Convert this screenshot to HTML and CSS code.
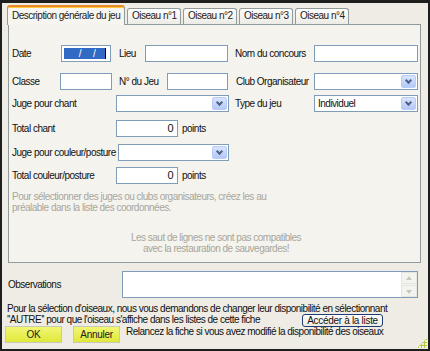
FILE: index.html
```html
<!DOCTYPE html>
<html lang="fr">
<head>
    <meta charset="UTF-8">
    <title>Description du jeu</title>
    <link rel="stylesheet" href="styles.css">
</head>
<body>
<div class="window">
    <!-- Onglets -->
    <div class="tabs">
        <div class="tab active">Description générale du jeu</div>
        <div class="tab">Oiseau n°1</div>
        <div class="tab">Oiseau n°2</div>
        <div class="tab">Oiseau n°3</div>
        <div class="tab">Oiseau n°4</div>
    </div>

    <div class="panel">
        <div class="row r1">
            <span class="lbl w49">Date</span>
            <div class="field date w50"><span class="sel">&nbsp;/&nbsp;&nbsp;/</span><span class="caret"></span></div>
            <span class="lbl lieu">Lieu</span>
            <div class="field w83"></div>
            <span class="lbl nom">Nom du concours</span>
            <div class="field w104"></div>
        </div>
        <div class="row r2">
            <span class="lbl w48">Classe</span>
            <div class="field w52"></div>
            <span class="lbl njeu">N° du Jeu</span>
            <div class="field w61"></div>
            <span class="lbl club">Club Organisateur</span>
            <div class="field combo w104"><span class="arrow"></span></div>
        </div>
        <div class="row r3">
            <span class="lbl w104">Juge pour chant</span>
            <div class="field combo w113"><span class="arrow"></span></div>
            <span class="lbl type">Type du jeu</span>
            <div class="field combo w104"><span class="val">Individuel</span><span class="arrow"></span></div>
        </div>
        <div class="row r4">
            <span class="lbl w104">Total chant</span>
            <div class="field num w62">0</div>
            <span class="unit">points</span>
        </div>
        <div class="row r5">
            <span class="lbl w106">Juge pour couleur/posture</span>
            <div class="field combo w111"><span class="arrow"></span></div>
        </div>
        <div class="row r6">
            <span class="lbl w104">Total couleur/posture</span>
            <div class="field num w62">0</div>
            <span class="unit">points</span>
        </div>
        <p class="hint">Pour sélectionner des juges ou clubs organisateurs, créez les au<br>préalable dans la liste des coordonnées.</p>
        <p class="hint center">Les saut de lignes ne sont pas compatibles<br>avec la restauration de sauvegardes!</p>
    </div>

    <div class="obs">
        <span class="obs-lbl">Observations</span>
        <div class="memo">
            <div class="scroll"><span class="up"></span><span class="down"></span></div>
        </div>
    </div>

    <div class="info">
        <div>Pour la sélection d'oiseaux, nous vous demandons de changer leur disponibilité en sélectionnant</div>
        <div class="info-line">''AUTRE'' pour que l'oiseau s'affiche dans les listes de cette fiche <button class="xp-btn">Accéder à la liste</button></div>
    </div>

    <div class="actions">
        <button class="yb ok">OK</button>
        <button class="yb cancel">Annuler</button>
        <span class="relance">Relancez la fiche si vous avez modifié la disponibilité des oiseaux</span>
    </div>
    <div class="grip"></div>
</div>
</body>
</html>
```

FILE: styles.css
```css
* { box-sizing: border-box; }
body { margin: 0; font-family: 'Liberation Sans', Arial, sans-serif; font-size: 10px; letter-spacing: -0.5px; color: #111; background: #222; }

.window { position: relative; width: 430px; height: 351px; border: 2px solid #1e1e1e; border-top-width: 3px; background: #eeece4; padding: 1px 0 0 5px; overflow: hidden; }

/* Tabs */
.tabs { display: flex; align-items: flex-end; gap: 2px; height: 20px; position: relative; z-index: 2; }
.tab { width: 54px; height: 16px; text-align: center; line-height: 14px; border: 1px solid #919b9c; border-bottom: none; border-radius: 3px 3px 0 0; background: linear-gradient(#fefefe, #ecebe6); color: #222; white-space: nowrap; }
.tab.active { width: auto; height: 20px; padding: 0 4px; line-height: 17px; border-top: 2px solid #e68b2c; background: #f6f5f0; margin-bottom: -1px; box-shadow: inset 0 1px 0 #ffc73c; }

.panel { margin-left: 1px; width: 413px; height: 239px; border: 1px solid #919b9c; background: #f4f3ee; padding: 20px 0 0 3px; }

/* Rows */
.row { display: flex; align-items: center; height: 17px; white-space: nowrap; }
.r2 { margin-top: 11px; }
.r3 { margin-top: 5px; }
.r4 { margin-top: 8px; }
.r5 { margin-top: 7px; }
.r6 { margin-top: 6px; }

.lbl { flex: none; }
.w48 { width: 48px; } .w49 { width: 49px; } .w104 { width: 104px; } .w106 { width: 106px; }
.lieu { width: 26px; margin-left: 8px; }
.nom { width: 79px; margin-left: 7px; }
.njeu { width: 48px; margin-left: 7px; }
.club { width: 78px; margin-left: 8px; }
.type { width: 79px; margin-left: 6px; }

.field { position: relative; flex: none; height: 17px; background: #fff; border: 1px solid #7f9db9; }
.w50 { width: 50px; } .w52 { width: 52px; } .w61 { width: 61px; } .w62 { width: 62px; }
.w83 { width: 83px; } .w111 { width: 111px; } .w113 { width: 113px; }
.field.w104 { width: 104px; }

.date { padding: 2px; }
.date .sel { display: block; height: 11px; width: 42px; background: #316ac5; color: #fff; line-height: 11px; padding-left: 10px; letter-spacing: 2px; }
.date .caret { position: absolute; right: 4px; top: 2px; width: 1px; height: 11px; background: #000; }

.num { text-align: right; padding-right: 4px; line-height: 15px; font-size: 11px; }
.unit { margin-left: 4px; }

.combo .val { padding-left: 3px; line-height: 15px; }
.arrow { position: absolute; right: 1px; top: 1px; width: 15px; height: 13px; border-radius: 2px; background: linear-gradient(#d9e4fd, #b4c8f7); border: 1px solid #b9cdf9; }
.arrow::after { content: ""; position: absolute; left: 4px; top: 2px; width: 3px; height: 3px; border-right: 2px solid #4d6185; border-bottom: 2px solid #4d6185; transform: rotate(45deg); }

.hint { margin: 0; color: #a8a69c; line-height: 11px; }
.hint:first-of-type { margin-top: 7px; }
.center { text-align: center; margin-top: 19px; }

/* Observations */
.obs { display: flex; align-items: center; height: 27px; margin-top: 8px; margin-left: 1px; }
.obs-lbl { width: 114px; }
.memo { position: relative; width: 296px; height: 27px; border: 1px solid #7f9db9; background: #fff; }
.scroll { position: absolute; right: 0; top: 0; bottom: 0; width: 16px; background: #f4f3ee; display: flex; flex-direction: column; justify-content: space-between; }
.scroll span { height: 12px; border: 1px solid #e6e5de; background: #f3f3ef; position: relative; }
.scroll .up::after, .scroll .down::after { content: ""; position: absolute; left: 4px; width: 0; height: 0; border-left: 3px solid transparent; border-right: 3px solid transparent; }
.scroll .up::after { top: 3px; border-bottom: 4px solid #c9c7ba; }
.scroll .down::after { top: 4px; border-top: 4px solid #c9c7ba; }

/* Infos bas */
.info { margin-top: 5px; line-height: 11px; white-space: nowrap; }
.info-line { position: relative; }
.xp-btn { position: absolute; left: 295px; top: 0; width: 81px; height: 13px; padding: 0; font-family: inherit; font-size: 10px; letter-spacing: -0.3px; line-height: 10px; color: #111; background: linear-gradient(#fff, #eceae1); border: 1px solid #1f3b73; border-radius: 3px; }

.actions { display: flex; align-items: flex-start; margin-top: 1px; margin-left: -2px; white-space: nowrap; }
.yb { height: 17px; padding: 0; font-family: inherit; font-size: 10px; letter-spacing: -0.3px; color: #222; background: linear-gradient(#f2f773, #dfe83a); border: 1px solid #c8c8b8; }
.ok { width: 57px; }
.cancel { width: 47px; margin-left: 11px; }
.relance { margin-left: 6px; line-height: 11px; }

.grip { position: absolute; right: 1px; bottom: 1px; width: 10px; height: 10px; background: radial-gradient(circle, #b7c83e 1px, transparent 1.2px) 0 0 / 3px 3px; clip-path: polygon(100% 0, 100% 100%, 0 100%); }
```
